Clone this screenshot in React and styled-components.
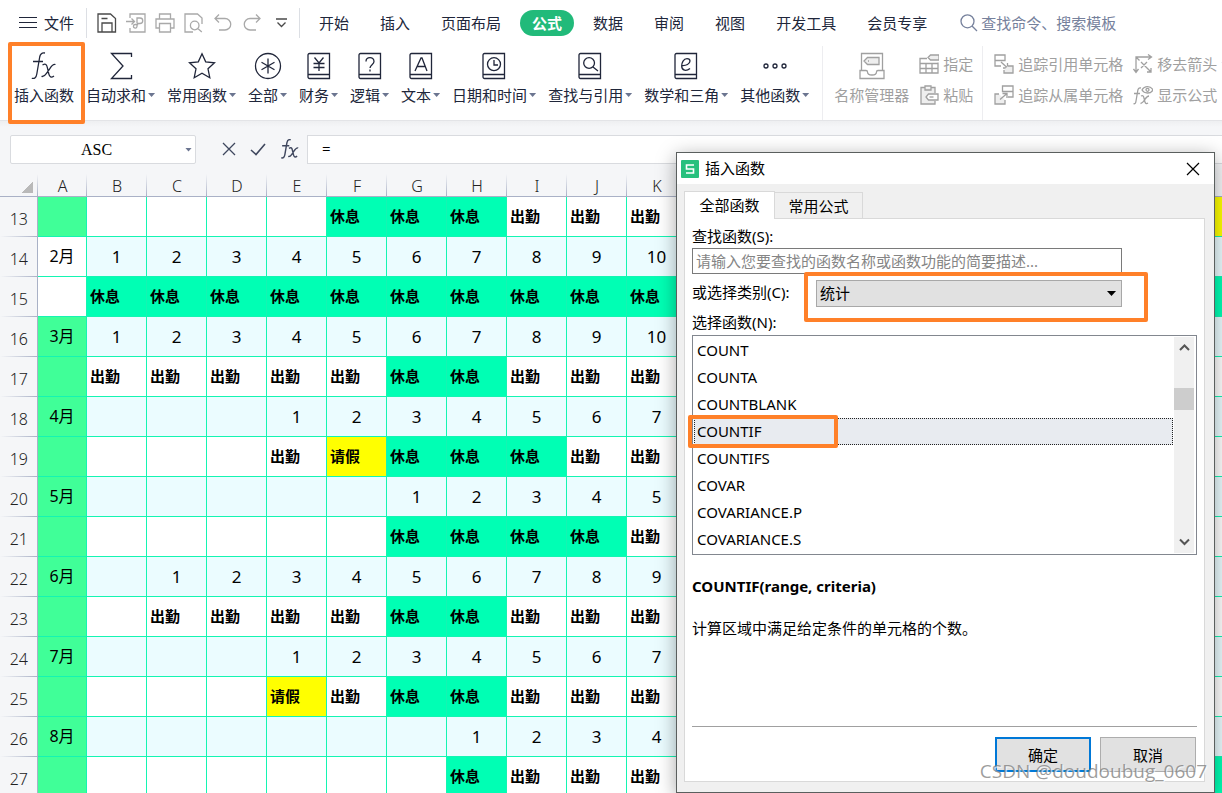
// Imports
import React from 'react';
import styled, { createGlobalStyle, css } from 'styled-components';

// Data
const menus = ['开始', '插入', '页面布局', '公式', '数据', '审阅', '视图', '开发工具', '会员专享'];

const tools = [
	{ label: '自动求和', icon: 'sum' },
	{ label: '常用函数', icon: 'star' },
	{ label: '全部', icon: 'all' },
	{ label: '财务', icon: 'yen' },
	{ label: '逻辑', icon: 'question' },
	{ label: '文本', icon: 'letter' },
	{ label: '日期和时间', icon: 'clock' },
	{ label: '查找与引用', icon: 'find' },
	{ label: '数学和三角', icon: 'euler' },
	{ label: '其他函数', icon: 'dots' },
];

const columns = 'ABCDEFGHIJKLMNOPQRST'.split('');

// w = work, r = rest, l = leave, R / L = coloured cell without a label
const rows = [
	{ no: 13, month: '', cells: '....rrrwww........L' },
	{ no: 14, month: '2月', plain: true, start: 0, days: true },
	{ no: 15, month: '', plain: true, cells: 'rrrrrrrrrrRRRRRRRRR' },
	{ no: 16, month: '3月', start: 0, days: true },
	{ no: 17, month: '', cells: 'wwwwwrrwww.........' },
	{ no: 18, month: '4月', start: 3, days: true },
	{ no: 19, month: '', cells: '...wlrrrww.........' },
	{ no: 20, month: '5月', start: 5, days: true },
	{ no: 21, month: '', cells: '.....rrrrw.........' },
	{ no: 22, month: '6月', start: 1, days: true },
	{ no: 23, month: '', cells: '.wwwwrrwww.........' },
	{ no: 24, month: '7月', start: 3, days: true },
	{ no: 25, month: '', cells: '...lwrrwww.........' },
	{ no: 26, month: '8月', start: 6, days: true },
	{ no: 27, month: '', cells: '......rwww..RRRRRRR' },
];

const statusText = { w: '出勤', r: '休息', l: '请假' };
const statusColor = { r: '#00ffb4', R: '#00ffb4', l: '#ffff00', L: '#ffff00' };

const functionNames = ['COUNT', 'COUNTA', 'COUNTBLANK', 'COUNTIF', 'COUNTIFS', 'COVAR', 'COVARIANCE.P', 'COVARIANCE.S'];

// Icons
const shapes = {
	burger: <path d="M0 4.500h18M0 9.500h18M0 14.500h18"/>,
	save: <path d="M1 1h12.500l5 4.500V19H1zM5 19v-9h10v9M4.500 5.500h6"/>,
	export: <path d="M4 5V1h15v18H4v-4M0 8.500h8M5.500 5.500l3 3-3 3M11 10V5h3a2 2 0 0 1 0 5.500h-3M11 10.500v3a1.800 1.800 0 1 1-1.800-2h3"/>,
	print: <path d="M4.500 6V1h11v5M4.500 15H1V6h18v9h-3.500M4.500 10.500h11V19h-11z"/>,
	preview: <path d="M9 19H1V1h12.500L18 5v6M15 12.500a4.300 4.300 0 1 1-8.600 0 4.300 4.300 0 0 1 8.600 0zM13.800 15.500l4 3.500"/>,
	undo: <path d="M6 1.500L2 5.500l4 4M2 5.500h10a5.700 5.700 0 0 1 0 11.500H6"/>,
	redo: <path d="M14 1.500l4 4-4 4M18 5.500H8A5.700 5.700 0 0 0 8 17h6"/>,
	more: <path d="M0 1h11M1.500 4.500l4 4 4-4"/>,
	search: <path d="M14 7.300A6.500 6.500 0 1 1 1 7.300a6.500 6.500 0 0 1 13 0zM12 12l5 5"/>,
	fx: <path d="M15 1c-3-.6-4.600.6-5.300 4L6.800 22c-.6 3.600-2.200 5-5 4.300M3 9.500h10M12.500 13c3.200-1.800 4.200-.6 5 3.200l1.300 5.600c.8 3.400 2.400 4.200 5.200 2.200M25.500 12.500c-2-.6-3.800 1-6 4.600l-3 4.300c-1.800 2.600-3 3.600-5 3"/>,
	sum: <path d="M24.500 5V1.500H4.500L16 14 4.500 26.500h20V23"/>,
	star: <path d="M14 1.800l3.700 8 8.800 1-6.500 6 1.800 8.900-7.800-4.400-7.800 4.400L8 16.800l-6.500-6 8.800-1z"/>,
	all: <path d="M26.500 14a12.500 12.500 0 1 1-25 0 12.500 12.500 0 0 1 25 0zM14 6.500v15M7.500 10.200l13 7.600M20.500 10.200l-13 7.600"/>,
	book: <path d="M4.500 1.500h20v25h-20a1.500 1.500 0 0 1-1.500-1.500V3a1.500 1.500 0 0 1 1.500-1.500zM3.500 22.500h21"/>,
	yen: <path d="M9.500 5.500l4.500 5.500 4.500-5.500M14 11v8M8.500 11.500h11M8.500 15.500h11"/>,
	question: <path d="M10 9.500c0-5 8-5.200 8 0 0 3-4 3.300-4 6.500M14 17.500v2"/>,
	letter: <path d="M8 19l6-13h1l5 13M10 14.500h8.500"/>,
	clock: <path d="M20.500 12.200a6.500 6.500 0 1 1-13 0 6.500 6.500 0 0 1 13 0zM14 8v5h4"/>,
	find: <path d="M18.500 11a5.400 5.400 0 1 1-10.800 0 5.400 5.400 0 0 1 10.800 0zM17 15l5 4"/>,
	euler: <path d="M10 13.500c4 .3 8-1.600 8-4.400 0-1.600-1.300-2.400-3-2.400-3.500 0-5.300 3.800-5.300 7.300 0 5 4.800 5.400 8.300 2.500"/>,
	dots: <path d="M7 14a2 2 0 1 1-4 0 2 2 0 0 1 4 0zM16 14a2 2 0 1 1-4 0 2 2 0 0 1 4 0zM25 14a2 2 0 1 1-4 0 2 2 0 0 1 4 0z"/>,
	names: (
		<>
			<path d="M3.500 18V1.500h21V18M2 18.500h6c1 0 1.500.5 1.500 1.500 0 4 9 4 9 0 0-1 .5-1.500 1.500-1.500h6v8H2z"/>
			<path fill="#eee" d="M9.500 5.500H21v7H9.500L6 9z"/>
			<path d="M10 9h1"/>
		</>
	),
	assign: (
		<>
			<path d="M8 4.500H1V19h18V8.500M1 9.500h18M1 14.500h18M7 9.500V19M13 9.500V19"/>
			<path fill="#eee" d="M11.500 1H20v5h-8.500L9 3.500z"/>
		</>
	),
	paste: (
		<>
			<path fill="#eee" stroke="none" d="M2 2.500h14V19H2z"/>
			<path d="M6 1h6v4H6zM6 2.500H2V19h14v-3M12 2.500h4V8"/>
			<path fill="#fff" d="M9.500 9H19v6H9.500L7 12z"/>
			<path d="M10.500 12h4"/>
		</>
	),
	traceIn: (
		<>
			<path d="M1 1h10v5.500H1zM1 6.500V12h6M7 8l6 5.500M13.500 9v5H9"/>
			<path fill="#eee" d="M14 12h5v7H10v-3"/>
		</>
	),
	traceOut: (
		<>
			<path fill="#eee" d="M5 9H1v10h10v-4"/>
			<path d="M8.500 1H19v5.500H8.500zM19 6.500V12h-5M6 14.500l7-6M8.500 8.500h4.500V13"/>
		</>
	),
	arrows: <path d="M3 18V3h15M15 .5L18.500 3 15 5.500M.5 15L3 18.500 5.500 15M3 3l3.500 3.500M14 14l4 4M18 14v4h-4M8 8l6 6M14 8l-6 6"/>,
	showFormula: (
		<>
			<path d="M8 3C5.500 2.500 5 4 4.700 6L3 16c-.3 2.400-1 3-2.500 2.700M1 8.500h6M8 11c2-.8 2.600 0 3 2l1 4c.5 1.800 1.600 2 3 1M16 11c-2 0-3 1.800-4.500 4S9 18.500 7.500 18.500"/>
			<path d="M9 5c2.500-4.500 8.500-4.500 11 0-2.500 4-8.500 4-11 0z"/>
			<circle cx="14.500" cy="4.800" r="1.500"/>
		</>
	),
	close: <path d="M1 1l12 12M13 1L1 13"/>,
	check: <path d="M1 8l5 4.500L15 2"/>,
	up: <path d="M1 6l4.500-4.500L10 6"/>,
	down: <path d="M1 1.500L5.500 6 10 1.500"/>,
};

const books = ['yen', 'question', 'letter', 'clock', 'find', 'euler'];

const Icon = ({ name, w = 20, h = 20, box, stroke = 1.3 }) => {
	return(
		<IconSvg width={ w } height={ h } viewBox={ box || `0 0 ${ w } ${ h }` } strokeWidth={ stroke } aria-hidden="true">
			{ books.includes(name) && shapes.book }
			{ shapes[name] }
		</IconSvg>
	);
};

// Menu bar
const MenuBar = () => {
	return(
		<MenuContainer>
			<FileButton type="button">
				<Icon name="burger" w={ 18 } stroke={ 1 }/>
				文件
			</FileButton>
			<QuickBar>
				<QuickButton type="button" aria-label="保存" $strong><Icon name="save"/></QuickButton>
				<QuickButton type="button" aria-label="输出"><Icon name="export"/></QuickButton>
				<QuickButton type="button" aria-label="打印"><Icon name="print"/></QuickButton>
				<QuickButton type="button" aria-label="预览"><Icon name="preview"/></QuickButton>
				<QuickButton type="button" aria-label="撤销"><Icon name="undo"/></QuickButton>
				<QuickButton type="button" aria-label="恢复"><Icon name="redo"/></QuickButton>
				<QuickButton type="button" aria-label="更多" $strong><Icon name="more" w={ 11 } h={ 10 }/></QuickButton>
			</QuickBar>
			<MenuTabs>
				{
					menus.map((menu) => {
						return(
							<MenuTab key={ menu } type="button" $active={ menu === '公式' }>{ menu }</MenuTab>
						);
					})
				}
			</MenuTabs>
			<CommandSearch type="button">
				<Icon name="search" w={ 18 } h={ 18 }/>
				查找命令、搜索模板
			</CommandSearch>
		</MenuContainer>
	);
};

// Ribbon
const Ribbon = () => {
	return(
		<RibbonContainer>
			<ToolGroup>
				<Tool type="button">
					<Icon name="fx" w={ 28 } h={ 28 }/>
					<ToolLabel>插入函数</ToolLabel>
					<Highlight $top={ -10 } $left={ -6 } $width={ 77 } $height={ 82 }/>
				</Tool>
				{
					tools.map(({ label, icon }) => {
						return(
							<Tool key={ label } type="button">
								<Icon name={ icon } w={ 28 } h={ 28 }/>
								<ToolLabel>{ label }<Caret/></ToolLabel>
							</Tool>
						);
					})
				}
			</ToolGroup>
			<ToolGroup $muted>
				<Tool type="button">
					<Icon name="names" w={ 28 } h={ 28 }/>
					<ToolLabel>名称管理器</ToolLabel>
				</Tool>
				<SmallStack>
					<SmallTool type="button"><Icon name="assign"/>指定</SmallTool>
					<SmallTool type="button"><Icon name="paste"/>粘贴</SmallTool>
				</SmallStack>
			</ToolGroup>
			<ToolGroup $muted>
				<SmallStack>
					<SmallTool type="button"><Icon name="traceIn"/>追踪引用单元格</SmallTool>
					<SmallTool type="button"><Icon name="traceOut"/>追踪从属单元格</SmallTool>
				</SmallStack>
				<SmallStack>
					<SmallTool type="button"><Icon name="arrows"/>移去箭头<Caret/></SmallTool>
					<SmallTool type="button"><Icon name="showFormula"/>显示公式</SmallTool>
				</SmallStack>
			</ToolGroup>
		</RibbonContainer>
	);
};

// Formula bar
const FormulaBar = () => {
	return(
		<FormulaContainer>
			<NameBox>
				<input aria-label="名称框" defaultValue="ASC"/>
				<button type="button" aria-label="展开名称"><Caret/></button>
			</NameBox>
			<FormulaButtons>
				<button type="button" aria-label="取消编辑"><Icon name="close" w={ 14 } h={ 14 }/></button>
				<button type="button" aria-label="确认编辑"><Icon name="check" w={ 16 } h={ 14 } stroke={ 1.6 }/></button>
				<button type="button" aria-label="函数"><Icon name="fx" w={ 20 } h={ 20 } box="0 0 28 28" stroke={ 2 }/></button>
			</FormulaButtons>
			<FormulaInput aria-label="编辑栏" defaultValue="="/>
		</FormulaContainer>
	);
};

// Sheet
const SheetRow = ({ row }) => {
	const { no, month, plain, start, days, cells } = row;
	return(
		<tr>
			<RowHead scope="row">{ no }</RowHead>
			<MonthCell $plain={ plain }>{ month }</MonthCell>
			{
				columns.slice(1).map((column, index) => {
					if (days) {
						return(
							<DayCell key={ column }>{ index >= start && index < 10 ? index - start + 1 : '' }</DayCell>
						);
					}
					return(
						<StatusCell key={ column } $fill={ statusColor[cells[index]] }>{ statusText[cells[index]] }</StatusCell>
					);
				})
			}
		</tr>
	);
};

const Sheet = () => {
	return(
		<SheetTable>
			<colgroup>
				<HeadCol/>
				<MonthCol/>
				{ columns.slice(1).map((column) => <DayCol key={ column }/>) }
			</colgroup>
			<thead>
				<tr>
					<Corner aria-label="全选"/>
					{ columns.map((column) => <ColumnHead key={ column } scope="col">{ column < 'L' ? column : '' }</ColumnHead>) }
				</tr>
			</thead>
			<tbody>
				{ rows.map((row) => <SheetRow key={ row.no } row={ row }/>) }
			</tbody>
		</SheetTable>
	);
};

// Dialog
const FunctionDialog = () => {
	return(
		<DialogWindow role="dialog" aria-labelledby="dialog-title">
			<TitleBar>
				<AppLogo viewBox="0 0 18 18" aria-hidden="true">
					<rect width="18" height="18" rx="1" fill="#27c07d"/>
					<path d="M13 5H5.500v4h7v4H5" fill="none" stroke="#fff" strokeWidth="1.600"/>
				</AppLogo>
				<h1 id="dialog-title">插入函数</h1>
				<button type="button" aria-label="关闭"><Icon name="close" w={ 14 } h={ 14 } stroke={ 1.2 }/></button>
			</TitleBar>
			<DialogBody>
				<TabList role="tablist">
					<DialogTab type="button" role="tab" aria-selected="true" $active>全部函数</DialogTab>
					<DialogTab type="button" role="tab" aria-selected="false">常用公式</DialogTab>
				</TabList>
				<Pane>
					<FieldLabel htmlFor="find-function">查找函数(S):</FieldLabel>
					<FindInput id="find-function" placeholder="请输入您要查找的函数名称或函数功能的简要描述..."/>
					<CategoryRow>
						<FieldLabel htmlFor="category">或选择类别(C):</FieldLabel>
						<SelectWrap>
							<select id="category" defaultValue="统计">
								<option>统计</option>
							</select>
							<Caret $dark/>
						</SelectWrap>
						<Highlight $top={ -8 } $left={ 112 } $width={ 344 } $height={ 50 }/>
					</CategoryRow>
					<FieldLabel as="span" id="function-label">选择函数(N):</FieldLabel>
					<ListFrame>
						<FunctionList role="listbox" aria-labelledby="function-label">
							{
								functionNames.map((name) => {
									const selected = name === 'COUNTIF';
									return(
										<FunctionItem key={ name } role="option" aria-selected={ selected } $selected={ selected }>
											{ name }
											{ selected && <Highlight $top={ -4 } $left={ -7 } $width={ 150 } $height={ 33 }/> }
										</FunctionItem>
									);
								})
							}
						</FunctionList>
						<ScrollTrack>
							<Icon name="up" w={ 11 } h={ 8 } stroke={ 2 }/>
							<ScrollThumb/>
							<Icon name="down" w={ 11 } h={ 8 } stroke={ 2 }/>
						</ScrollTrack>
					</ListFrame>
					<Syntax>COUNTIF(range, criteria)</Syntax>
					<Description>计算区域中满足给定条件的单元格的个数。</Description>
					<DialogActions>
						<DialogButton type="button" $primary>确定</DialogButton>
						<DialogButton type="button">取消</DialogButton>
					</DialogActions>
				</Pane>
			</DialogBody>
		</DialogWindow>
	);
};

// Component
const App = () => {

	// Return
	return(
		<Page>
			<GlobalStyle/>
			<MenuBar/>
			<Ribbon/>
			<FormulaBar/>
			<Sheet/>
			<FunctionDialog/>
			<Watermark>CSDN @doudoubug_0607</Watermark>
		</Page>
	);

};

// Styled
const GlobalStyle = createGlobalStyle`
	* {
		box-sizing: border-box;
	}
	body {
		margin: 0;
		font-family: "Noto Sans", "Noto Sans CJK SC", sans-serif;
		font-size: 15px;
		line-height: 20px;
		color: #20263a;
	}
	button, input, select {
		font: inherit;
		color: inherit;
		margin: 0;
		padding: 0;
		border: none;
		border-radius: 0;
		background: transparent;
		outline: none;
	}
	h1, p, ul {
		margin: 0;
		padding: 0;
		font-size: inherit;
		font-weight: normal;
		list-style: none;
	}
`;

const Page = styled.div`
	position: relative;
	height: 100vh;
	overflow: hidden;
	background: #fff;
`;

const IconSvg = styled.svg`
	flex: none;
	display: block;
	fill: none;
	stroke: currentColor;
`;

const Caret = styled.i`
	flex: none;
	width: ${ (props) => props.$dark ? 9 : 7 }px;
	height: ${ (props) => props.$dark ? 5 : 4 }px;
	background: ${ (props) => props.$dark ? '#000' : '#6b7590' };
	clip-path: polygon(0 0, 100% 0, 50% 100%);
`;

const Highlight = styled.span`
	position: absolute;
	z-index: 1;
	top: ${ (props) => props.$top }px;
	left: ${ (props) => props.$left }px;
	width: ${ (props) => props.$width }px;
	height: ${ (props) => props.$height }px;
	border: 4px solid #ff8029;
	border-radius: 2px;
	pointer-events: none;
`;

const MenuContainer = styled.header`
	display: flex;
	align-items: center;
	height: 46px;
	white-space: nowrap;
`;

const FileButton = styled.button`
	display: flex;
	align-items: center;
	gap: 7px;
	height: 30px;
	padding: 0 12px 0 19px;
	border-right: 1px solid #dcdfe4;
`;

const QuickBar = styled.div`
	display: flex;
	align-items: center;
	gap: 9px;
	height: 30px;
	padding: 0 8px 0 10px;
	border-right: 1px solid #dcdfe4;
`;

const QuickButton = styled.button`
	display: flex;
	align-items: center;
	justify-content: center;
	width: 20px;
	height: 20px;
	color: ${ (props) => props.$strong ? '#4a4a4a' : '#a9a9a9' };
`;

const MenuTabs = styled.nav`
	display: flex;
	gap: 7px;
	padding: 0 21px 0 7px;
`;

const MenuTab = styled.button`
	height: 26px;
	padding: 0 12px;
	border-radius: 13px;
	${ (props) => props.$active && css`
		background: #21ba7a;
		color: #fff;
		font-weight: bold;
	` }
`;

const CommandSearch = styled.button`
	display: flex;
	align-items: center;
	gap: 3px;
	color: #76819c;
`;

const RibbonContainer = styled.section`
	display: flex;
	height: 75px;
	border-bottom: 1px solid #e3e4e7;
	white-space: nowrap;
`;

const ToolGroup = styled.div`
	display: flex;
	flex: none;
	gap: 12px;
	padding: 6px 13px 0 14px;
	& + & {
		gap: 10px;
		padding: 6px 9px 0 11px;
		border-left: 1px solid #ededf0;
	}
	${ (props) => props.$muted && css`
		color: #a0a0a0;
	` }
`;

const Tool = styled.button`
	position: relative;
	display: flex;
	flex-direction: column;
	align-items: center;
	gap: 5px;
	height: 68px;
`;

const ToolLabel = styled.span`
	display: flex;
	align-items: center;
	gap: 2px;
`;

const SmallStack = styled.div`
	display: flex;
	flex-direction: column;
	margin-top: -4px;
`;

const SmallTool = styled.button`
	display: flex;
	align-items: center;
	gap: 4px;
	height: 31px;
`;

const FormulaContainer = styled.section`
	display: flex;
	height: 53px;
	padding-top: 14px;
	background: linear-gradient(#eeeff1, #f5f6f8 6px);
`;

const NameBox = styled.div`
	display: flex;
	align-items: center;
	width: 186px;
	height: 29px;
	margin-left: 10px;
	border: 1px solid #d9dbdf;
	border-radius: 2px;
	background: #fff;
	input {
		flex: 1;
		min-width: 0;
		font-family: "Liberation Serif", serif;
		font-size: 16px;
		color: #000;
		text-align: center;
	}
	button {
		display: flex;
		padding: 4px 3px;
	}
`;

const FormulaButtons = styled.div`
	display: flex;
	align-items: center;
	gap: 14px;
	height: 28px;
	padding: 0 7px 0 26px;
	color: #3f475e;
	button {
		display: flex;
	}
`;

const FormulaInput = styled.input`
	flex: 1;
	height: 29px;
	padding: 0 14px 4px;
	border: 1px solid #d9dbdf;
	border-right: none;
	background: #fff;
	color: #000;
`;

const SheetTable = styled.table`
	width: 1227px;
	table-layout: fixed;
	border-collapse: separate;
	border-spacing: 0;
	color: #000;
	white-space: nowrap;
`;

const HeadCol = styled.col`
	width: 38px;
`;

const MonthCol = styled.col`
	width: 49px;
`;

const DayCol = styled.col`
	width: 60px;
`;

const ColumnHead = styled.th`
	height: 23px;
	padding: 3px 0 0;
	border-bottom: 1px solid #a9b1c6;
	background: linear-gradient(#f5f6f8, #a9b1c6) right / 1px 100% no-repeat #f5f6f8;
	font-size: 16px;
	line-height: 19px;
	font-weight: 300;
	color: #222;
`;

const Corner = styled(ColumnHead)`
	background:
		linear-gradient(#f5f6f8, #a9b1c6) right / 1px 100% no-repeat,
		linear-gradient(135deg, transparent 50%, #b9b9b9 50%) 21px 7px / 12px 12px no-repeat,
		#f5f6f8;
`;

const RowHead = styled.th`
	height: 40px;
	padding: 4px 9px 0 0;
	border-right: 1px solid #a9b1c6;
	background: linear-gradient(90deg, #f5f6f8, #a9b1c6) bottom / 100% 1px no-repeat #f5f6f8;
	font-size: 16px;
	font-weight: 300;
	text-align: right;
	color: #222;
`;

const Cell = styled.td`
	height: 40px;
	padding: 0;
	border-right: 1px solid #14f5b2;
	border-bottom: 1px solid #14f5b2;
`;

const MonthCell = styled(Cell)`
	padding-bottom: 2px;
	background: ${ (props) => props.$plain ? '#fff' : '#40ff98' };
	text-align: center;
	font-size: 16px;
`;

const DayCell = styled(Cell)`
	background: #ebfcff;
	text-align: center;
	font-size: 17px;
`;

const StatusCell = styled(Cell)`
	padding: 0 0 2px 3px;
	background: ${ (props) => props.$fill || '#fff' };
	font-weight: bold;
`;

const DialogWindow = styled.section`
	position: absolute;
	top: 152px;
	right: 7px;
	display: flex;
	flex-direction: column;
	width: 539px;
	min-height: 641px;
	border: 1px solid #5a5f5e;
	background: #f0f0f0;
	color: #000;
	box-shadow: 0 4px 18px rgba(0, 0, 0, 0.35);
`;

const TitleBar = styled.div`
	display: flex;
	align-items: center;
	gap: 6px;
	height: 31px;
	padding: 0 14px 0 4px;
	background: #fff;
	h1 {
		flex: 1;
		padding-bottom: 2px;
	}
`;

const AppLogo = styled.svg`
	width: 18px;
	height: 18px;
`;

const DialogBody = styled.div`
	flex: 1;
	display: flex;
	flex-direction: column;
	padding: 7px 9px 10px 7px;
`;

const TabList = styled.div`
	display: flex;
	align-items: flex-end;
	height: 27px;
`;

const DialogTab = styled.button`
	width: 88px;
	height: 26px;
	border: 1px solid #d9d9d9;
	border-width: 1px 1px 0 0;
	${ (props) => props.$active && css`
		position: relative;
		width: 91px;
		height: 28px;
		margin-bottom: -1px;
		padding-bottom: 2px;
		border-left-width: 1px;
		background: #fff;
	` }
`;

const Pane = styled.div`
	flex: 1;
	display: flex;
	flex-direction: column;
	padding: 8px 7px 9px;
	border: 1px solid #d9d9d9;
	background: #fff;
`;

const FieldLabel = styled.label`
	height: 21px;
	line-height: 18px;
`;

const FindInput = styled.input`
	width: 430px;
	height: 26px;
	padding: 0 3px;
	border: 1px solid #7a7a7a;
	&::placeholder {
		color: #858585;
		opacity: 1;
	}
`;

const CategoryRow = styled.div`
	position: relative;
	display: flex;
	align-items: center;
	justify-content: space-between;
	width: 430px;
	margin: 6px 0;
`;

const SelectWrap = styled.div`
	display: flex;
	align-items: center;
	width: 306px;
	height: 27px;
	padding-right: 5px;
	border: 1px solid #a8a8a8;
	background: #e1e1e1;
	select {
		flex: 1;
		height: 25px;
		padding: 0 0 2px 3px;
		appearance: none;
	}
`;

const ListFrame = styled.div`
	display: flex;
	margin-top: 1px;
	padding: 1px 2px 1px 1px;
	border: 1px solid #82878f;
`;

const FunctionList = styled.ul`
	flex: 1;
`;

const FunctionItem = styled.li`
	position: relative;
	height: 27px;
	padding-left: 2px;
	border: 1px solid transparent;
	line-height: 24px;
	${ (props) => props.$selected && css`
		border: 1px dotted #222;
		background: #e8ebf0;
	` }
`;

const ScrollTrack = styled.div`
	display: flex;
	flex-direction: column;
	align-items: center;
	width: 20px;
	margin-left: 1px;
	padding: 7px 0;
	background: #f0f0f0;
	color: #555;
	svg:last-child {
		margin-top: auto;
	}
`;

const ScrollThumb = styled.div`
	width: 20px;
	height: 22px;
	margin-top: 36px;
	background: #cdcdcd;
`;

const Syntax = styled.p`
	margin-top: 21px;
	font-weight: bold;
`;

const Description = styled.p`
	margin-top: 22px;
`;

const DialogActions = styled.div`
	display: flex;
	justify-content: flex-end;
	gap: 9px;
	margin-top: auto;
	padding: 10px 1px 0 0;
	border-top: 1px solid #a0a0a0;
`;

const DialogButton = styled.button`
	width: 96px;
	height: 35px;
	border: ${ (props) => props.$primary ? '2px solid #0078d7' : '1px solid #adadad' };
	background: #e1e1e1;
`;

const Watermark = styled.div`
	position: absolute;
	right: 15px;
	bottom: 8px;
	font-family: "Open Sans", "Noto Sans", sans-serif;
	font-size: 19px;
	line-height: 28px;
	color: rgba(125, 125, 125, 0.75);
	text-shadow: 1px 1px 1px rgba(255, 255, 255, 0.9);
	pointer-events: none;
`;

// Export
export default App;
